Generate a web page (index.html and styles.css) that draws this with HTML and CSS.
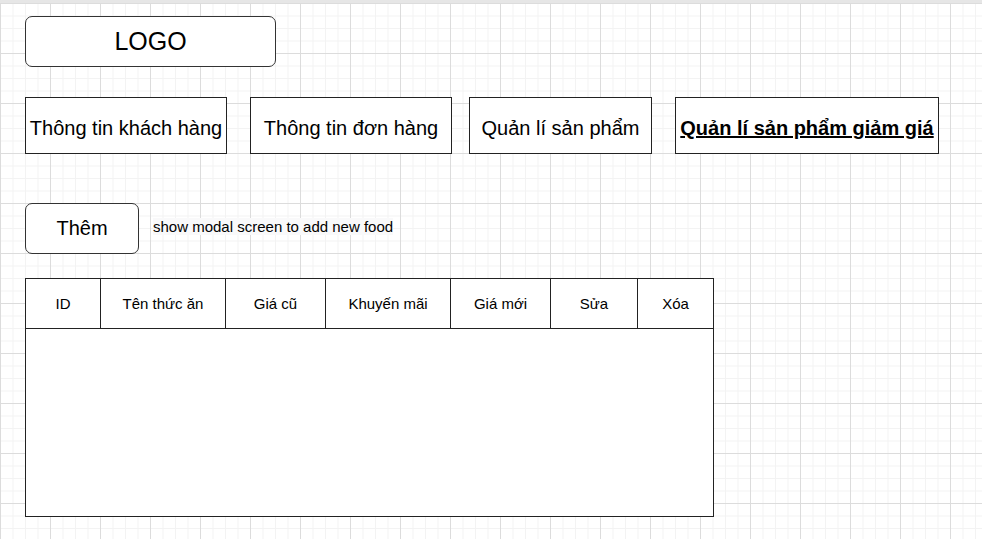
FILE: index.html
```html
<!DOCTYPE html>
<html lang="vi">
<head>
<meta charset="utf-8">
<title>Quản lí sản phẩm giảm giá</title>
<link rel="stylesheet" href="styles.css">
</head>
<body>
<div class="canvas">
  <div class="logo">LOGO</div>
  <nav class="nav">
    <div class="nav-item w-1">Thông tin khách hàng</div>
    <div class="nav-item w-2">Thông tin đơn hàng</div>
    <div class="nav-item w-3">Quản lí sản phẩm</div>
    <div class="nav-item w-4 active">Quản lí sản phẩm giảm giá</div>
  </nav>
  <div class="actions">
    <div class="add-btn">Thêm</div>
    <span class="note">show modal screen to add new food</span>
  </div>
  <div class="table">
    <div class="thead">
      <div class="th">ID</div>
      <div class="th">Tên thức ăn</div>
      <div class="th">Giá cũ</div>
      <div class="th">Khuyến mãi</div>
      <div class="th">Giá mới</div>
      <div class="th">Sửa</div>
      <div class="th">Xóa</div>
    </div>
    <div class="tbody"></div>
  </div>
</div>
</body>
</html>
```

FILE: styles.css
```css
* { box-sizing: border-box; }
html, body { margin: 0; padding: 0; }
body {
  font-family: "Liberation Sans", Arial, Helvetica, sans-serif;
  color: #000;
  background: #fff;
}
.canvas {
  min-height: 539px;
  border-top: 3px solid #e6e6e6;
  padding: 13px 0 0 25px;
  background-color: #fff;
  background-image:
    linear-gradient(to right, #dcdcdc 1px, transparent 1px),
    linear-gradient(to bottom, #dcdcdc 1px, transparent 1px),
    linear-gradient(to right, #f3f3f3 1px, transparent 1px),
    linear-gradient(to bottom, #f3f3f3 1px, transparent 1px);
  background-size: 50px 50px, 50px 50px, 12.5px 12.5px, 12.5px 12.5px;
}
.logo {
  width: 251px;
  height: 51px;
  border: 1px solid #333;
  border-radius: 7px;
  background: #fff;
  display: flex;
  align-items: center;
  justify-content: center;
  font-size: 25px;
}
.nav {
  display: flex;
  margin-top: 30px;
}
.nav-item {
  height: 57px;
  border: 1px solid #222;
  background: #fff;
  display: flex;
  align-items: center;
  justify-content: center;
  font-size: 20px;
  white-space: nowrap;
  padding-top: 5px;
}
.w-1 { width: 202px; margin-right: 23px; }
.w-2 { width: 202px; margin-right: 17px; }
.w-3 { width: 183px; margin-right: 23px; }
.w-4 { width: 264px; }
.active {
  font-weight: bold;
  text-decoration: underline;
}
.actions {
  display: flex;
  align-items: center;
  margin-top: 49px;
}
.add-btn {
  width: 114px;
  height: 51px;
  border: 1px solid #333;
  border-radius: 7px;
  background: #fff;
  display: flex;
  align-items: center;
  justify-content: center;
  font-size: 20px;
}
.note {
  margin-left: 14px;
  margin-bottom: 5px;
  font-size: 15px;
  line-height: 17px;
  background: #f9f9fa;
}
.table {
  margin-top: 24px;
  width: 689px;
  height: 239px;
  border: 1px solid #222;
  background: #fff;
  display: flex;
  flex-direction: column;
}
.thead {
  display: grid;
  grid-template-columns: 75px 125px 100px 125px 100px 87px 75px;
  height: 50px;
  border-bottom: 1px solid #222;
}
.th {
  display: flex;
  align-items: center;
  justify-content: center;
  font-size: 15px;
  border-right: 1px solid #222;
  padding-bottom: 1px;
}
.th:last-child { border-right: none; }
.tbody { flex: 1; }
```
